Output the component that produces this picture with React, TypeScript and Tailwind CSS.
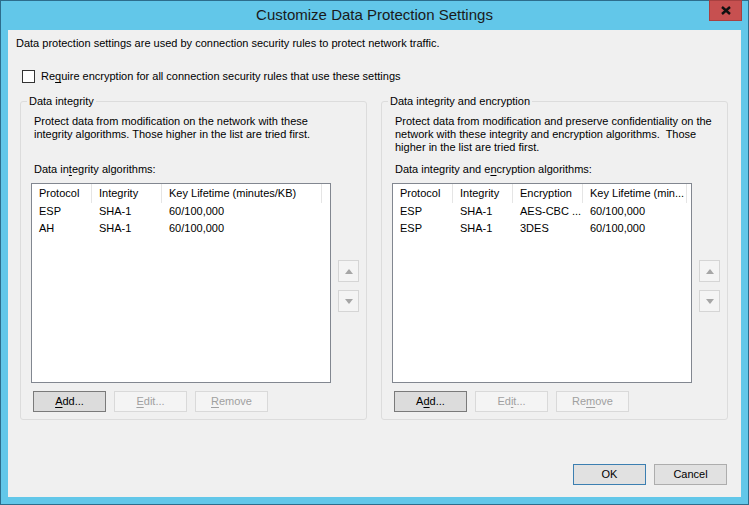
import React from "react";

function Mn({ text, i }: { text: string; i: number }) {
  return (
    <>
      {text.slice(0, i)}
      <span className="underline underline-offset-[2px]">{text[i]}</span>
      {text.slice(i + 1)}
    </>
  );
}

type BtnKind = "normal" | "focus" | "disabled" | "default";

function Btn({ kind = "normal", children }: { kind?: BtnKind; children: React.ReactNode }) {
  const look =
    kind === "disabled"
      ? "bg-[#f4f4f4] border-[#d9d9d9] text-[#a0a0a0]"
      : kind === "focus"
        ? "bg-[#dcdcdc] border-[#7a7a7a] text-black"
        : kind === "default"
          ? "bg-[#e1e1e1] border-[#3c7fb1] text-black"
          : "bg-[#e1e1e1] border-[#adadad] text-black";
  return (
    <div className={`w-[73px] h-[21px] border flex items-center justify-center leading-[15px] ${look}`}>
      {children}
    </div>
  );
}

function Arrow({ up }: { up?: boolean }) {
  return (
    <div className="w-[21px] h-[22px] border border-[#d5d5d5] bg-[#f4f4f4] flex items-center justify-center">
      <svg width="8" height="5" viewBox="0 0 8 5">
        {up ? <path d="M0 5h8L4 0z" fill="#a6a6a6" /> : <path d="M0 0h8L4 5z" fill="#a6a6a6" />}
      </svg>
    </div>
  );
}

type Col = { w: number; label: string };

function ListView({ cols, rows }: { cols: Col[]; rows: string[][] }) {
  return (
    <div className="mt-[7px] w-[300px] h-[200px] border border-[#828790] bg-white overflow-hidden">
      <div className="flex h-[19px]">
        {cols.map((c) => (
          <div
            key={c.label}
            style={{ width: c.w }}
            className="shrink-0 pl-[7px] border-r border-[#e5e5e5] flex items-center whitespace-nowrap overflow-hidden"
          >
            {c.label}
          </div>
        ))}
      </div>
      {rows.map((r, ri) => (
        <div key={ri} className="flex h-[17px] items-center">
          {r.map((cell, ci) => (
            <div key={ci} style={{ width: cols[ci].w }} className="shrink-0 pl-[7px] whitespace-nowrap">
              {cell}
            </div>
          ))}
        </div>
      ))}
    </div>
  );
}

function Group({
  title,
  desc,
  label,
  cols,
  rows,
  buttons,
}: {
  title: string;
  desc: React.ReactNode;
  label: React.ReactNode;
  cols: Col[];
  rows: string[][];
  buttons: React.ReactNode;
}) {
  return (
    <div className="relative w-[347px] h-[319px] border border-[#dcdcdc] rounded-[3px] flex">
      <span className="absolute -top-[8px] left-[6px] px-[2px] bg-[#f0f0f0] leading-[15px]">{title}</span>
      <div className="w-[310px] shrink-0 flex flex-col pl-[10px] pt-[13px]">
        <div className="pl-[3px] h-[48px] leading-[13px] whitespace-nowrap">{desc}</div>
        <div className="pl-[3px] h-[13px] leading-[13px] whitespace-nowrap">{label}</div>
        <ListView cols={cols} rows={rows} />
        <div className="mt-[8px] flex gap-[8px] pl-[2px]">{buttons}</div>
      </div>
      <div className="flex flex-col gap-[8px] ml-[7px] pt-[158px]">
        <Arrow up />
        <Arrow />
      </div>
    </div>
  );
}

export default function App() {
  return (
    <div className="w-[749px] h-[505px] bg-[#62c7e9] border border-[#2d6d8c] relative flex flex-col font-['Liberation_Sans',Arial,sans-serif] text-[11px] text-black">
      {/* Title bar */}
      <div className="h-[29px] flex items-center justify-center text-[15px] text-[#1a1a1a]">
        Customize Data Protection Settings
      </div>
      <div className="absolute -top-[1px] right-[6px] w-[33px] h-[21px] bg-[#c75050] border border-[#a84040] flex items-center justify-center">
        <svg width="10" height="9" viewBox="0 0 10 9">
          <path d="M1 1l8 7M9 1L1 8" stroke="#111" strokeWidth="2.4" />
        </svg>
      </div>

      {/* Client area */}
      <div className="mx-[7px] mb-[7px] flex-1 bg-[#f0f0f0] flex flex-col pt-[6px] pl-[8px]">
        <div className="h-[15px] leading-[15px]">
          Data protection settings are used by connection security rules to protect network traffic.
        </div>
        <div className="mt-[18px] ml-[6px] h-[15px] flex items-center gap-[6px]">
          <div className="w-[13px] h-[13px] border border-[#333] bg-white" />
          <span>
            <Mn text="Require encryption for all connection security rules that use these settings" i={2} />
          </span>
        </div>

        <div className="mt-[17px] ml-[4px] flex gap-[14px]">
          <Group
            title="Data integrity"
            desc={
              <>
                Protect data from modification on the network with these
                <br />
                integrity algorithms. Those higher in the list are tried first.
              </>
            }
            label={<Mn text="Data integrity algorithms:" i={7} />}
            cols={[
              { w: 60, label: "Protocol" },
              { w: 70, label: "Integrity" },
              { w: 160, label: "Key Lifetime (minutes/KB)" },
            ]}
            rows={[
              ["ESP", "SHA-1", "60/100,000"],
              ["AH", "SHA-1", "60/100,000"],
            ]}
            buttons={
              <>
                <Btn kind="focus">
                  <Mn text="Add..." i={0} />
                </Btn>
                <Btn kind="disabled">
                  <Mn text="Edit..." i={0} />
                </Btn>
                <Btn kind="disabled">
                  <Mn text="Remove" i={0} />
                </Btn>
              </>
            }
          />
          <Group
            title="Data integrity and encryption"
            desc={
              <>
                Protect data from modification and preserve confidentiality on the
                <br />
                network with these integrity and encryption algorithms.&nbsp; Those
                <br />
                higher in the list are tried first.
              </>
            }
            label={<Mn text="Data integrity and encryption algorithms:" i={20} />}
            cols={[
              { w: 60, label: "Protocol" },
              { w: 60, label: "Integrity" },
              { w: 70, label: "Encryption" },
              { w: 104, label: "Key Lifetime (min..." },
            ]}
            rows={[
              ["ESP", "SHA-1", "AES-CBC ...", "60/100,000"],
              ["ESP", "SHA-1", "3DES", "60/100,000"],
            ]}
            buttons={
              <>
                <Btn kind="focus">
                  <Mn text="Add..." i={1} />
                </Btn>
                <Btn kind="disabled">
                  <Mn text="Edit..." i={2} />
                </Btn>
                <Btn kind="disabled">
                  <Mn text="Remove" i={2} />
                </Btn>
              </>
            }
          />
        </div>

        <div className="mt-[44px] mr-[14px] flex justify-end gap-[8px]">
          <Btn kind="default">OK</Btn>
          <Btn>Cancel</Btn>
        </div>
      </div>
    </div>
  );
}
